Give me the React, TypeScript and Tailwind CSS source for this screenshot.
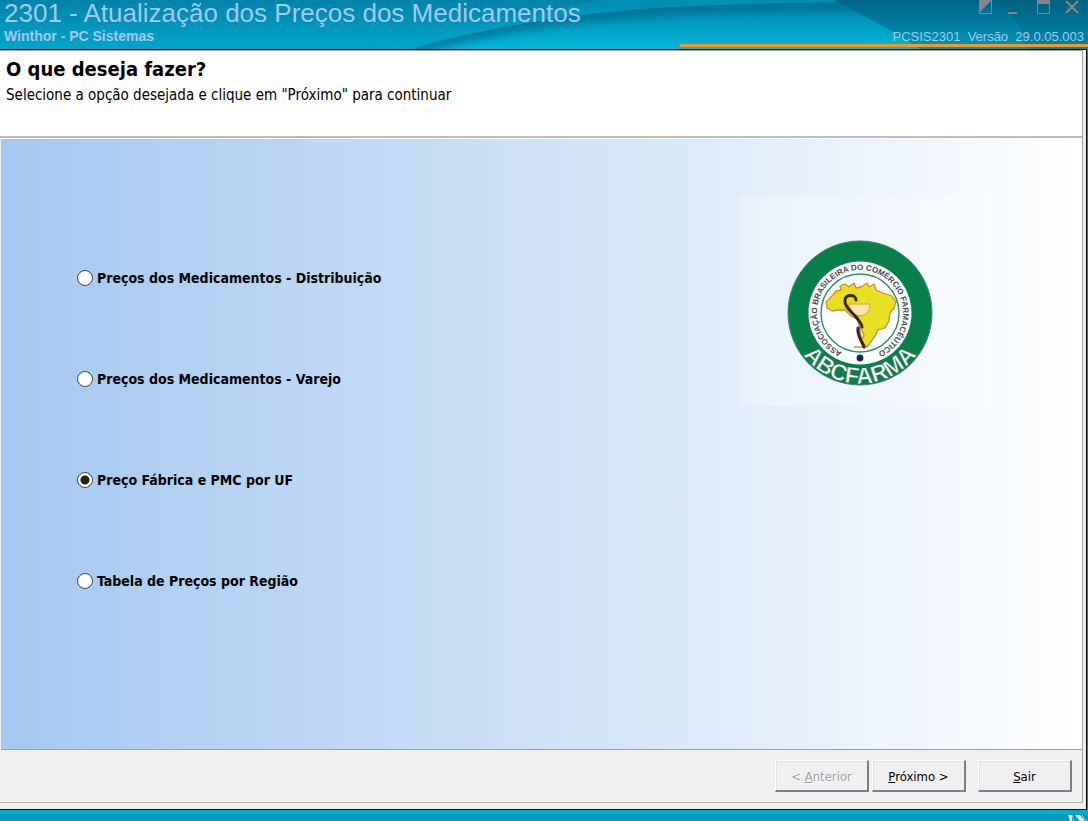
import React, { useState } from "react";

const options = [
  { id: "distribuicao", label: "Preços dos Medicamentos - Distribuição" },
  { id: "varejo", label: "Preços dos Medicamentos - Varejo" },
  { id: "pmc", label: "Preço Fábrica e PMC por UF" },
  { id: "regiao", label: "Tabela de Preços por Região" },
];

const buttonClass =
  "flex h-8 w-[94px] items-center justify-center border-t border-l border-r-2 border-b-2 border-t-white border-l-white border-r-[#7b7f88] border-b-[#7b7f88] bg-[#f0f0f0] pt-0.5 text-[13px] leading-4 text-black shadow-[inset_1px_1px_0_#e0e0e0] disabled:text-[#a3a3a3] disabled:[text-shadow:1px_1px_0_#fff]";

const HeaderWaves = () => (
  <svg
    className="absolute inset-0 h-full w-full"
    viewBox="0 0 1088 49"
    preserveAspectRatio="none"
    aria-hidden="true"
  >
    <defs>
      <linearGradient id="sky" x1="0" y1="0" x2="0" y2="1">
        <stop offset="0" stopColor="#0083a9" />
        <stop offset="1" stopColor="#00a5c8" />
      </linearGradient>
      <linearGradient id="wave" gradientUnits="userSpaceOnUse" x1="0" y1="4" x2="0" y2="49">
        <stop offset="0" stopColor="#0083a7" />
        <stop offset="0.5" stopColor="#009fc2" />
        <stop offset="1" stopColor="#00b9da" />
      </linearGradient>
      <linearGradient id="shade" gradientUnits="userSpaceOnUse" x1="0" y1="0" x2="0" y2="46">
        <stop offset="0" stopColor="#006485" />
        <stop offset="0.4" stopColor="#00779b" />
        <stop offset="1" stopColor="#0096b8" />
      </linearGradient>
      <linearGradient id="corner" x1="0" y1="0" x2="0" y2="1">
        <stop offset="0" stopColor="#006180" />
        <stop offset="1" stopColor="#0087aa" />
      </linearGradient>
      <clipPath id="waveClip">
        <path d="M412 49C480 28 590 8 724 5C760 3 800 3 842 2L1088 0V49Z" />
      </clipPath>
      <filter id="soften" filterUnits="userSpaceOnUse" x="380" y="-30" width="560" height="110">
        <feGaussianBlur stdDeviation="4" />
      </filter>
    </defs>
    <rect width="1088" height="49" fill="url(#sky)" />
    <path d="M330 49C420 42 500 22 600 0H840V49Z" fill="#00a4c6" opacity="0.35" />
    <g clipPath="url(#waveClip)">
      <rect x="400" width="688" height="49" fill="url(#wave)" />
      <path
        d="M412 49C480 28 590 8 724 5C760 3 800 3 900 2"
        stroke="#006d91"
        strokeWidth="15"
        strokeOpacity="0.75"
        fill="none"
        filter="url(#soften)"
      />
    </g>
    <path d="M834 0L890 30L920 49H1088V0Z" fill="url(#shade)" />
    <path d="M995 0C1010 11 1019 23 1023 36L1026 49H1088V0Z" fill="url(#corner)" />
  </svg>
);

const WindowControls = () => (
  <div className="flex gap-[14px] text-[#84848a]">
    <button type="button" aria-label="Recolher">
      <svg width="15" height="14" viewBox="0 0 15 14" className="block">
        <path d="M1.5 0V13.5H13.5V0" stroke="currentColor" fill="none" />
        <path d="M1 0H14L1 13Z" fill="currentColor" />
      </svg>
    </button>
    <button type="button" aria-label="Minimizar">
      <svg width="15" height="14" viewBox="0 0 15 14" className="block">
        <path d="M1 13H10" stroke="currentColor" strokeWidth="2" />
      </svg>
    </button>
    <button type="button" aria-label="Maximizar">
      <svg width="15" height="14" viewBox="0 0 15 14" className="block">
        <path d="M1.5 0V13.5H13.5V0" stroke="currentColor" fill="none" />
        <path d="M1 0H14V4H1Z" fill="currentColor" />
      </svg>
    </button>
    <button type="button" aria-label="Fechar">
      <svg width="15" height="14" viewBox="0 0 15 14" className="block">
        <path d="M1 1L13 13M13 1L1 13" stroke="currentColor" strokeWidth="2.2" />
      </svg>
    </button>
  </div>
);

const AbcFarmaLogo = () => (
  <svg
    width="146"
    height="146"
    viewBox="0 0 146 146"
    className="overflow-visible"
    role="img"
    aria-label="ABCFARMA"
  >
    <defs>
      <path id="ringText" d="M60 114A43 43 0 1 1 86 114" />
      <path id="nameText" d="M12 108A70 70 0 0 0 134 108" />
    </defs>
    <circle cx="73" cy="73" r="72" fill="#087f4b" stroke="#3d8566" strokeWidth="1" />
    <circle cx="73" cy="73" r="51.5" fill="#fbfdfb" />
    <circle cx="73" cy="73" r="39" fill="#fdfefe" stroke="#2f8a6b" strokeWidth="1.4" />
    <text fontFamily="Liberation Sans, sans-serif" fontSize="8" fontWeight="700" fill="#4a4a5c">
      <textPath href="#ringText" startOffset="50%" textAnchor="middle">
        ASSOCIAÇÃO BRASILEIRA DO COMÉRCIO FARMACÊUTICO
      </textPath>
    </text>
    <path
      d="M46 55L49 51L54 50L53 46L58 44L62 47L67 43L69 48L74 47L80 43L82 47L87 44L89 50L96 53L105 56L109 62L107 68L103 73L102 81L98 88L91 90L88 96L83 103L80 107L74 101L77 95L73 87L70 79L64 76L58 70L51 70L45 71L40 68L39 62Z"
      fill="#e9df22"
      stroke="#c98f35"
      strokeWidth="1.3"
      strokeLinejoin="round"
    />
    <path d="M62 64H83C83 70 80 75 73 76C66 75 63 70 62 64Z" fill="#f4e8a6" stroke="#dd9a45" />
    <path d="M71 76L73 91L75 104M67 107H79" stroke="#b39a55" strokeWidth="1.5" fill="none" />
    <path
      d="M69 60C69 54 59 54 58 60C57 67 65 72 69 77C73 82 75 84 75 87M71 88C70 96 75 101 77 107"
      stroke="#37291f"
      strokeWidth="3"
      fill="none"
      strokeLinecap="round"
    />
    <circle cx="73" cy="118" r="3.4" fill="#1c2650" />
    <text
      fontFamily="Liberation Sans, sans-serif"
      fontSize="23"
      fontWeight="700"
      fill="#f4f9f4"
      stroke="#0a4a2e"
      strokeWidth="0.4"
    >
      <textPath href="#nameText" startOffset="50%" textAnchor="middle">
        ABCFARMA
      </textPath>
    </text>
  </svg>
);

const App = () => {
  const [selected, setSelected] = useState("pmc");

  return (
    <div className="flex min-h-screen flex-col bg-[#009cc0] font-['DejaVu_Sans_Condensed','DejaVu_Sans',sans-serif] text-black">
      <header className="relative h-[49px] font-['Liberation_Sans',Arial,sans-serif] text-[#a3c9ee]">
        <HeaderWaves />
        <div className="relative flex h-full justify-between pl-1">
          <div className="flex flex-col">
            <h1 className="text-[26px] leading-[26px] whitespace-nowrap">
              2301 - Atualização dos Preços dos Medicamentos
            </h1>
            <p className="pt-0.5 text-[14px] leading-4 font-bold">Winthor - PC Sistemas</p>
          </div>
          <div className="flex flex-col items-end justify-between">
            <div className="pr-2">
              <WindowControls />
            </div>
            <p className="pr-1 pb-1 text-[13px] leading-4 whitespace-pre">
              PCSIS2301  Versão  29.0.05.003
            </p>
          </div>
        </div>
        <div className="absolute right-0 bottom-0.5 left-[62.5%] h-[3px] bg-[#f29a1f]" />
      </header>

      <main className="mr-px flex flex-1 flex-col border-t border-r border-b border-black bg-[#f0f0f0] pr-[3px] pb-1.5">
        <div className="flex flex-1 flex-col border-t border-r border-b border-[#a5a5a5] border-b-[#b5b5b0]">
          <section className="h-[87px] border-b-2 border-[#bdbdbd] bg-white px-1.5 pt-1.5">
            <h2 className="text-[20px] leading-6 font-bold">O que deseja fazer?</h2>
            <p className="pt-1 text-[15px] leading-5">
              Selecione a opção desejada e clique em "Próximo" para continuar
            </p>
          </section>

          <section className="ml-px flex flex-1 items-start justify-between border-t border-b border-t-white border-b-[#a0a0a0] bg-linear-to-r from-[#a4c8f0] via-[#cfe2f7] to-white">
            <fieldset className="flex flex-col gap-20 pt-32 pl-[76px]">
              {options.map((option) => (
                <label
                  key={option.id}
                  htmlFor={option.id}
                  className="flex h-[21px] items-center gap-1 text-[14px] leading-4 font-bold"
                >
                  <input
                    id={option.id}
                    type="radio"
                    name="opcao"
                    checked={selected === option.id}
                    onChange={() => setSelected(option.id)}
                    className="h-4 w-4 appearance-none rounded-full border border-[#454545] bg-white checked:bg-[radial-gradient(circle,#222_4px,#fff_5px)]"
                  />
                  {option.label}
                </label>
              ))}
            </fieldset>
            <div className="mt-[57px] mr-[90px] flex h-[210px] w-[252px] items-center justify-center bg-white/25 pr-3 pt-6">
              <AbcFarmaLogo />
            </div>
          </section>

          <footer className="flex h-[52px] items-center justify-end pr-2.5">
            <div className="flex gap-[3px]">
              <button type="button" disabled className={buttonClass}>
                <span>
                  &lt; <u>A</u>nterior
                </span>
              </button>
              <button type="button" className={buttonClass}>
                <span>
                  <u>P</u>róximo &gt;
                </span>
              </button>
            </div>
            <button type="button" className={`ml-3 ${buttonClass}`}>
              <span>
                <u>S</u>air
              </span>
            </button>
          </footer>
        </div>
      </main>

      <div className="flex h-[11px] items-end justify-end border-t-4 border-[#00b0cd] bg-[#009cc0]">
        <svg width="22" height="6" viewBox="0 0 22 6" aria-hidden="true">
          <path d="M2 0H6V6H4ZM9 0H14L19 6H14Z" fill="#e8f6fb" />
          <path d="M6 0L8 6M16 0L20 6" stroke="#7cc9e0" />
        </svg>
      </div>
    </div>
  );
};

export default App;
